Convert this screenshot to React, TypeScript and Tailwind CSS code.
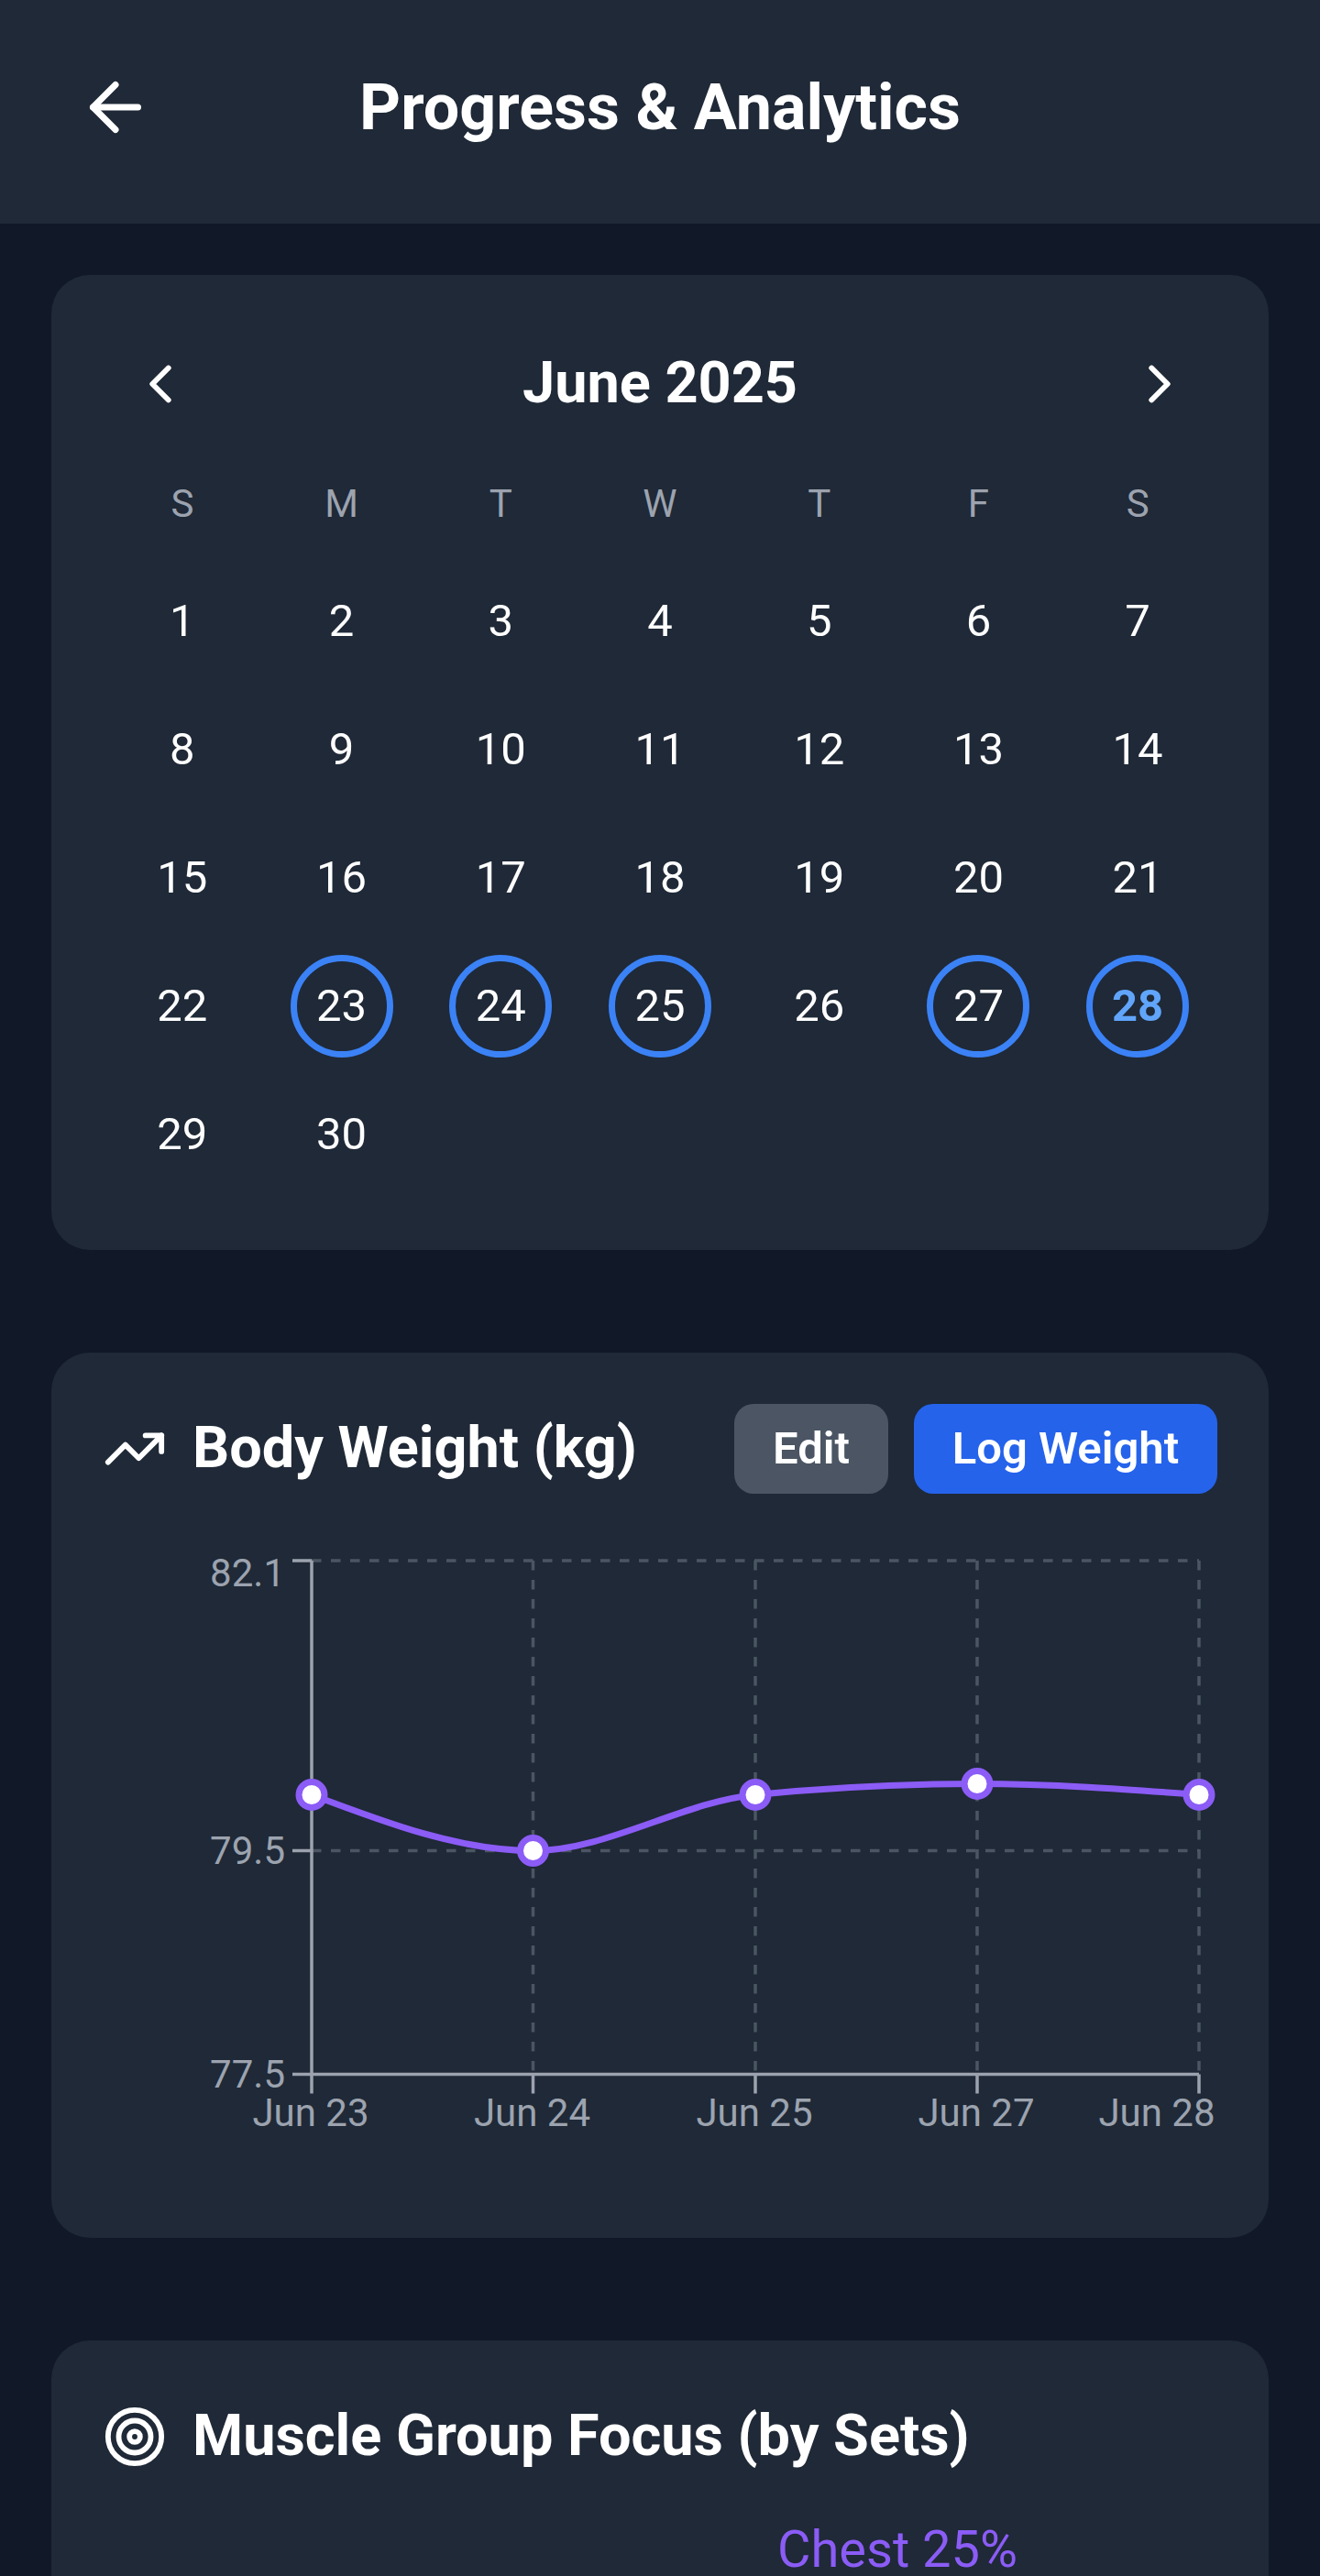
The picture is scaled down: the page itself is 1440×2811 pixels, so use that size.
import { ArrowLeft, ChevronLeft, ChevronRight, TrendingUp, Target } from "lucide-react";

const days = ["S", "M", "T", "W", "T", "F", "S"];
const cells: number[] = Array.from({ length: 30 }, (_, i) => i + 1);
const logged = [23, 24, 25, 27, 28];
const today = 28;

const ox = 112;
const oy = 1690;
const X = [340, 581.5, 824, 1066, 1308].map((x) => x - ox);
const Y = [1958.5, 2019.5, 1958.5, 1946.5, 1958.5].map((y) => y - oy);
const top = 1703 - oy;
const mid = 2019.5 - oy;
const bottom = 2263.5 - oy;

function Chart() {
  return (
    <svg width="1216" height="696" viewBox="0 0 1216 696" className="block">
      <g stroke="#4b5563" strokeWidth="3.5" strokeDasharray="10.5 10.5" fill="none">
        <line x1={X[0]} x2={X[4]} y1={top} y2={top} />
        <line x1={X[0]} x2={X[4]} y1={mid} y2={mid} />
        {X.slice(1).map((x) => (
          <line key={x} x1={x} x2={x} y1={top} y2={bottom} />
        ))}
      </g>
      <g stroke="#9ca3af" strokeWidth="3.5" fill="none">
        <line x1={X[0]} x2={X[0]} y1={top} y2={bottom} />
        <line x1={X[0]} x2={X[4]} y1={bottom} y2={bottom} />
        {[top, mid, bottom].map((y) => (
          <line key={y} x1={X[0] - 21} x2={X[0]} y1={y} y2={y} />
        ))}
        {X.map((x) => (
          <line key={x} x1={x} x2={x} y1={bottom} y2={bottom + 21} />
        ))}
      </g>
      <g fill="#9ca3af" fontSize="42" fontFamily="Roboto, sans-serif" textAnchor="end">
        <text x={311 - ox} y={1731 - oy}>82.1</text>
        <text x={311 - ox} y={2034 - oy}>79.5</text>
        <text x={311 - ox} y={2278 - oy}>77.5</text>
      </g>
      <g fill="#9ca3af" fontSize="42" fontFamily="Roboto, sans-serif" textAnchor="middle">
        <text x={X[0] - 1} y={2319.5 - oy}>Jun 23</text>
        <text x={X[1] - 1} y={2319.5 - oy}>Jun 24</text>
        <text x={X[2] - 1} y={2319.5 - oy}>Jun 25</text>
        <text x={X[3] - 1} y={2319.5 - oy}>Jun 27</text>
        <text x={1262 - ox} y={2319.5 - oy}>Jun 28</text>
      </g>
      <path
        d={`M${X[0]} ${Y[0]} C${X[0] + 80.5} ${Y[0] + 30.5} ${X[1] - 80.5} ${Y[1]} ${X[1]} ${Y[1]} C${X[1] + 80.8} ${Y[1]} ${X[2] - 80.8} ${Y[2] + 8} ${X[2]} ${Y[2]} C${X[2] + 80.7} ${Y[2] - 8} ${X[3] - 80.7} ${Y[3]} ${X[3]} ${Y[3]} C${X[3] + 80.7} ${Y[3]} ${X[4] - 80.7} ${Y[4] - 6} ${X[4]} ${Y[4]}`}
        fill="none"
        stroke="#8b5cf6"
        strokeWidth="7"
      />
      {X.map((x, i) => (
        <circle key={x} cx={x} cy={Y[i]} r="14" fill="#ffffff" stroke="#8b5cf6" strokeWidth="7" />
      ))}
    </svg>
  );
}

export default function App() {
  return (
    <div className="h-[2811px] overflow-hidden bg-[#111827] font-['Roboto',sans-serif] text-white">
      <header className="relative flex h-[244px] items-center justify-center bg-[#1f2937] pb-[10px]">
        <ArrowLeft className="absolute left-[84px] top-[75px]" size={84} strokeWidth={2} />
        <h1 className="text-[70px] font-bold leading-none">Progress &amp; Analytics</h1>
      </header>

      <main className="flex flex-col gap-[112px] px-[56px] pt-[56px]">
        <section className="rounded-[42px] bg-[#1f2937] px-[56px] pb-[70px] pt-[56px]">
          <div className="flex h-[126px] items-center justify-between">
            <div className="p-[28px]">
              <ChevronLeft size={70} strokeWidth={2} />
            </div>
            <h2 className="pb-[3px] text-[63px] font-bold leading-none">June 2025</h2>
            <div className="p-[28px]">
              <ChevronRight size={70} strokeWidth={2} />
            </div>
          </div>
          <div className="mb-[28px] mt-[22px] grid grid-cols-7">
            {days.map((d, i) => (
              <div key={i} className="flex h-[90px] items-center justify-center text-[42px] text-[#9ca3af]">
                {d}
              </div>
            ))}
          </div>
          <div className="grid grid-cols-7 gap-y-[28px]">
            {cells.map((n) => (
              <div key={n} className="flex justify-center">
                <div
                  className={`flex h-[112px] w-[112px] items-center justify-center rounded-full text-[49px] ${
                    logged.includes(n) ? "border-[7px] border-[#3b82f6]" : ""
                  } ${n === today ? "font-bold text-[#60a5fa]" : ""}`}
                >
                  {n}
                </div>
              </div>
            ))}
          </div>
        </section>

        <section className="rounded-[42px] bg-[#1f2937] p-[56px]">
          <div className="flex items-center justify-between">
            <div className="flex items-center gap-[28px]">
              <TrendingUp size={70} strokeWidth={2} />
              <h2 className="pb-[3px] text-[63px] font-bold leading-none">Body Weight (kg)</h2>
            </div>
            <div className="flex gap-[28px]">
              <button className="flex h-[98px] w-[168px] items-center justify-center rounded-[21px] bg-[#4b5563] text-[49px] font-semibold">
                Edit
              </button>
              <button className="flex h-[98px] w-[331px] items-center justify-center rounded-[21px] bg-[#2563eb] text-[49px] font-semibold">
                Log Weight
              </button>
            </div>
          </div>
          <div className="mt-[60px]">
            <Chart />
          </div>
        </section>

        <section className="rounded-[42px] bg-[#1f2937] p-[56px]">
          <div className="flex h-[98px] items-center gap-[28px]">
            <Target size={70} strokeWidth={2} />
            <h2 className="pb-[3px] text-[63px] font-bold leading-none">Muscle Group Focus (by Sets)</h2>
          </div>
          <div className="mt-[46px] pl-[736px] text-[56px] leading-none text-[#8b5cf6]">Chest 25%</div>
        </section>
      </main>
    </div>
  );
}
